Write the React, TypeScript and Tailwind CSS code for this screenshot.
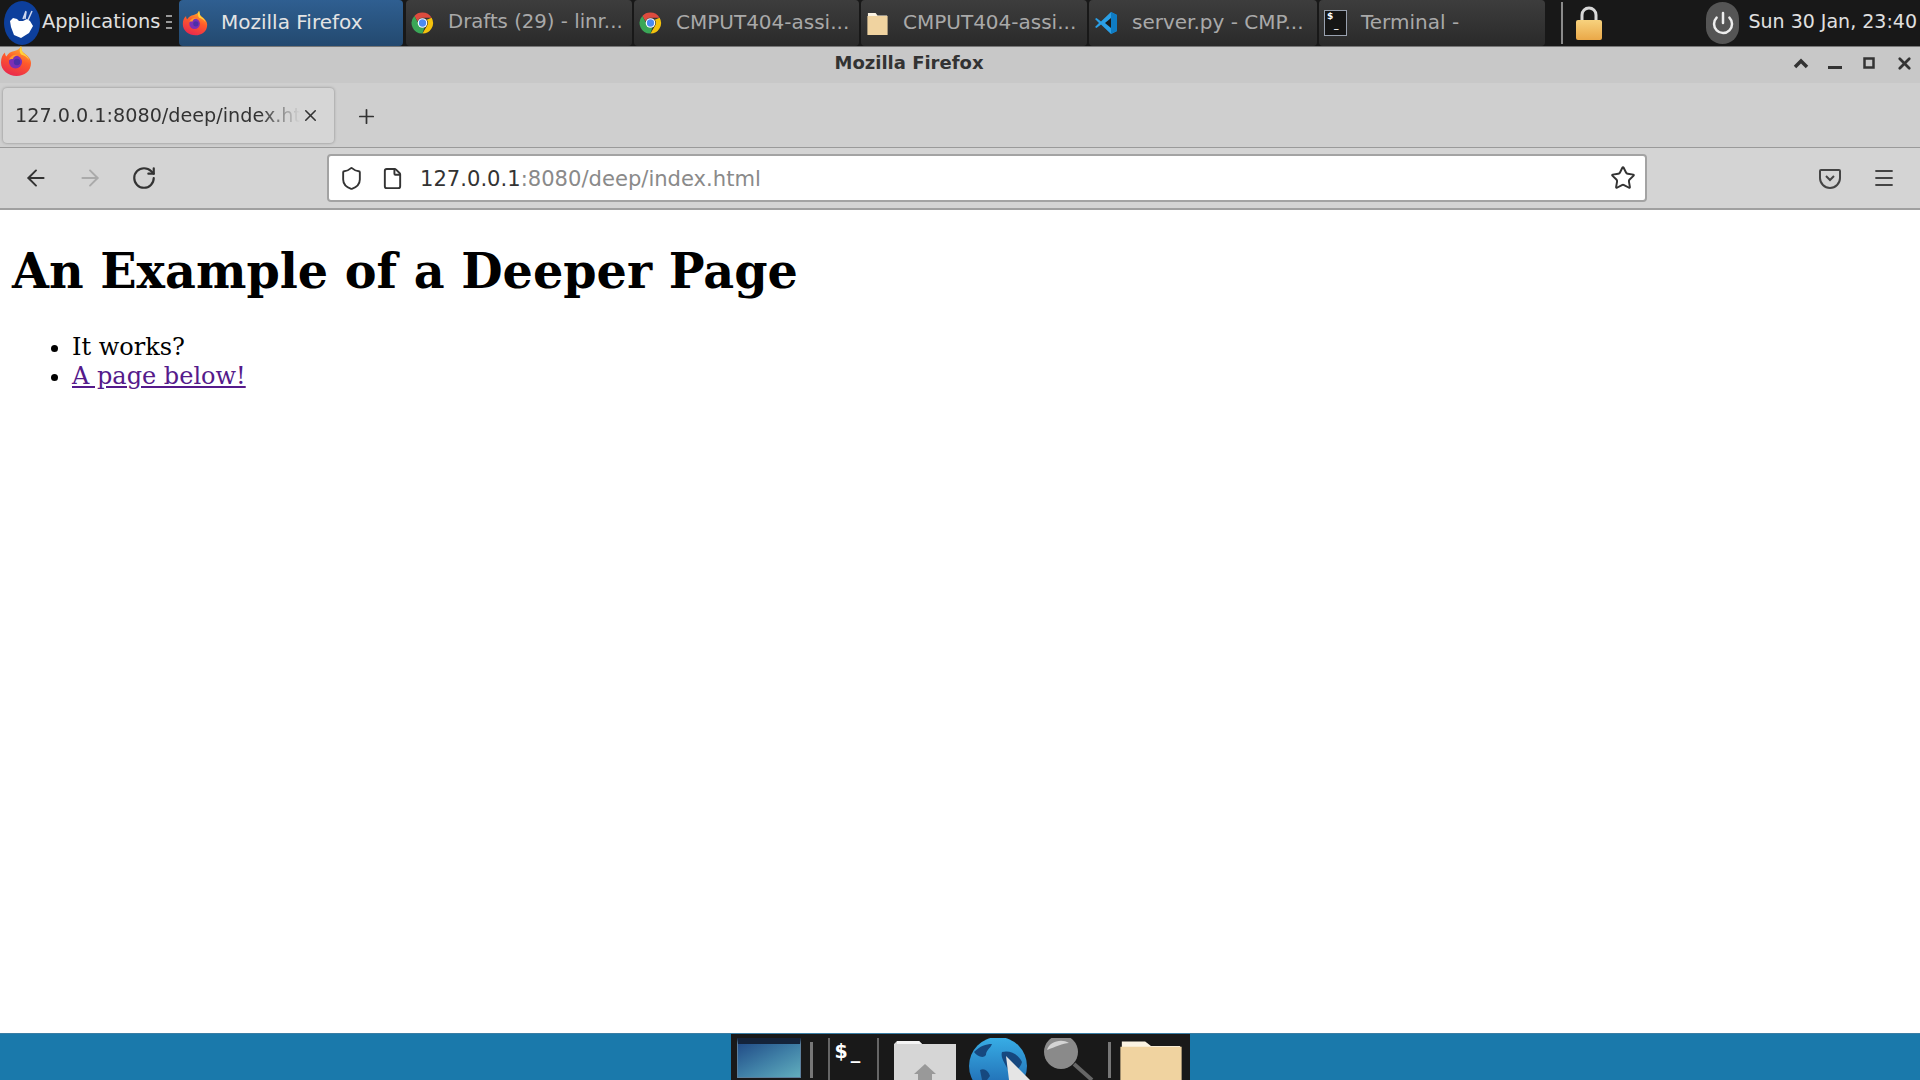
import React from 'react';
import { ArrowLeft, ArrowRight, RotateCw, Shield, File, Star, Menu, X, Plus, Power } from 'lucide-react';

const FirefoxIcon = ({ size }: { size: number }) => (
  <svg width={size} height={size} viewBox="0 0 32 32" className="shrink-0">
    <defs>
      <linearGradient id="ffBody" x1="0.7" y1="0" x2="0.3" y2="1">
        <stop offset="0" stopColor="#ffb52e" />
        <stop offset="0.45" stopColor="#ff5a2a" />
        <stop offset="1" stopColor="#e8274f" />
      </linearGradient>
    </defs>
    <path d="M21 1c1 3 0 5 3 7 4 3 7 6 7 10 0 8-6.500 13-14.500 13S1 25.500 1 17.500C1 13 2.500 9.500 5 7.500c0 2 .5 3 1.500 4 1.500-3 4-5 8-5.500 3-.5 5.500-2.500 6.500-5z" fill="url(#ffBody)" />
    <path d="M21 1c1 3 .5 6 3.500 8 2 1.500 4 3.500 4.500 6-2-3-5-5-8-5.500C19 7 19.500 4 21 1z" fill="#ffd43b" />
    <circle cx="15.500" cy="17" r="6.500" fill="#7b2fb5" />
    <circle cx="17" cy="17" r="3.200" fill="#4a2fa8" />
    <path d="M9 15c1-4 5-6 9-5-3 1-5 2-5 4-2 0-3 0-4 1z" fill="#ff9a2e" />
  </svg>
);

const ChromeIcon = () => (
  <svg width="23" height="26" viewBox="0 0 24 24" className="shrink-0">
    <path d="M12 1a11 11 0 0 1 9.530 5.500H12a5.500 5.500 0 0 0-5.200 3.700L3.500 4.600A11 11 0 0 1 12 1z" fill="#dd4b3e" />
    <path d="M21.530 6.500A11 11 0 0 1 12 23l4.700-8.200A5.500 5.500 0 0 0 16.500 8.500z" fill="#f4c20d" />
    <path d="M12 23A11 11 0 0 1 3.500 4.600l4.600 8.500a5 5 0 0 0 6 3.300z" fill="#3aa757" />
    <circle cx="12" cy="12" r="5" fill="#fff" />
    <circle cx="12" cy="12" r="3.800" fill="#4a8af4" />
  </svg>
);

const FolderIcon = ({ w, h }: { w: number; h: number }) => (
  <svg width={w} height={h} viewBox="0 0 24 24" preserveAspectRatio="none" className="shrink-0">
    <path d="M2 2h8l2 2.500h10V24H2z" fill="#fbf3e2" />
    <rect x="1.500" y="5" width="21" height="19" fill="#f0d3a0" />
  </svg>
);

const VsCodeIcon = () => (
  <svg width="24" height="28" viewBox="0 0 24 24" className="shrink-0">
    <path d="M17 1l6 3v16l-6 3-10-9.500L2.500 17 1 16l4-4-4-4 1.500-1L7 10.500z" fill="#2a9fe6" />
    <path d="M17 7l-6 5 6 5z" fill="#1b1b1b" />
    <path d="M17 1l6 3v16l-6 3z" fill="#0f7cc4" />
  </svg>
);

const TerminalIcon = () => (
  <div className="flex h-[26px] w-[23px] shrink-0 flex-col border border-gray-400 bg-[#161616] px-[2px] font-['DejaVu_Sans',sans-serif] text-[9px] leading-[10px] font-bold text-white">
    <span>$</span>
    <span className="-mt-[1px] ml-[7px]">_</span>
  </div>
);

const XfceLogo = () => (
  <svg width="38" height="44" viewBox="0 0 38 44" className="shrink-0">
    <ellipse cx="19" cy="22" rx="18" ry="22" fill="#0d3f9c" />
    <path d="M7 20l3-3 4 1 2 2 4 0 4-2 3 2 3 5-4 7-8 5-7-3-3-8z" fill="#fff" />
    <path d="M20 18l3-8M25 19l4-9M22 18l1-7" stroke="#cfd8ef" strokeWidth="1.500" fill="none" />
  </svg>
);

const taskTabs = [
  { label: 'Drafts (29) - linr...', icon: <ChromeIcon />, w: 'w-[226px]', size: 'text-[19.700px]' },
  { label: 'CMPUT404-assi...', icon: <ChromeIcon />, w: 'w-[225px]', size: 'text-[20px]' },
  { label: 'CMPUT404-assi...', icon: <FolderIcon w={23} h={24} />, w: 'w-[226px]', size: 'text-[20px]' },
  { label: 'server.py - CMP...', icon: <VsCodeIcon />, w: 'w-[228px]', size: 'text-[20px]' },
  { label: 'Terminal -', icon: <TerminalIcon />, w: 'w-[226px]', size: 'text-[20px]' },
];

const TopPanel = () => (
  <div className="flex h-[46px] shrink-0 items-stretch bg-[#181818] font-['DejaVu_Sans',sans-serif] text-[20px]">
    <div className="flex w-[179px] shrink-0 items-center pl-[3px]">
      <XfceLogo />
      <span className="mb-[2px] ml-[1px] text-[19.400px] text-[#e0e0e0]">Applications</span>
      <div className="mb-[2px] ml-[6px] flex h-[14px] w-[6px] flex-col justify-between">
        <div className="h-[2px] bg-[#999]" />
        <div className="h-[2px] bg-[#999]" />
        <div className="h-[2px] bg-[#999]" />
      </div>
    </div>
    <div className="flex w-[224px] shrink-0 items-center gap-[13px] rounded-[4px] bg-gradient-to-b from-[#2f5f91] to-[#23496f] pb-[1px] pl-[3px] text-[#e4e4e4]">
      <FirefoxIcon size={26} />
      <span className="mb-[2px]">Mozilla Firefox</span>
    </div>
    <div className="ml-[3px] flex gap-[2px]">
      {taskTabs.map((tab, i) => (
        <div
          key={i}
          className={`flex ${tab.w} ${tab.size} shrink-0 items-center gap-[14px] overflow-hidden rounded-[4px] bg-gradient-to-b from-[#3d3d3d] to-[#2a2a2a] pb-[1px] pl-[5px] whitespace-nowrap text-[#a9a9a9]`}
        >
          {tab.icon}
          <span className="mb-[2px]">{tab.label}</span>
        </div>
      ))}
    </div>
    <div className="my-[2px] ml-[16px] w-[2px] bg-[#8a8a8a]" />
    <div className="ml-[12px] flex items-center">
      <svg width="28" height="36" viewBox="0 0 28 36">
        <defs>
          <linearGradient id="lockBody" x1="0" y1="0" x2="0" y2="1">
            <stop offset="0" stopColor="#f7d27e" />
            <stop offset="1" stopColor="#eaa848" />
          </linearGradient>
        </defs>
        <path d="M7 16V10a7 7 0 0 1 14 0v6" fill="none" stroke="#d8d8d8" strokeWidth="3" />
        <rect x="1" y="15" width="26" height="20" rx="2" fill="url(#lockBody)" />
      </svg>
    </div>
    <div className="ml-auto flex items-center pr-[3px]">
      <div className="flex h-[42px] w-[33px] items-center justify-center rounded-full bg-[#555]">
        <Power size={24} strokeWidth={2.5} className="text-[#eee]" />
      </div>
      <span className="mb-[3px] ml-[9px] text-[19px] whitespace-nowrap text-[#e0e0e0]">Sun 30 Jan, 23:40</span>
    </div>
  </div>
);

const TitleBar = () => (
  <div className="relative flex h-[37px] shrink-0 items-center justify-center border-t border-[#777] bg-[#c8c8c8] pr-[102px] pb-[6px] font-['DejaVu_Sans',sans-serif] text-[18px] font-bold text-[#333]">
    <div className="absolute top-[-2px] left-0">
      <FirefoxIcon size={32} />
    </div>
    <span>Mozilla Firefox</span>
    <div className="absolute top-0 right-[6px] flex h-[32px] items-center gap-[18px]">
      <svg width="16" height="16" viewBox="0 0 16 16"><path d="M2 12l6-6 6 6" fill="none" stroke="#333" strokeWidth="3.500" /></svg>
      <svg width="16" height="16" viewBox="0 0 16 16"><rect x="1" y="11" width="14" height="3" fill="#333" /></svg>
      <svg width="16" height="16" viewBox="0 0 16 16"><rect x="3.500" y="3.500" width="9" height="9" fill="none" stroke="#333" strokeWidth="2.500" /></svg>
      <X size={19} strokeWidth={3.5} className="text-[#333]" />
    </div>
  </div>
);

const TabBar = () => (
  <div className="flex h-[65px] shrink-0 items-start border-b border-[#9a9a9a] bg-[#cfcfcf] pt-[5px] pl-[3px] font-['DejaVu_Sans',sans-serif]">
    <div className="flex h-[55px] w-[331px] items-center rounded-[4px] bg-[#d6d6d6] pl-[12px] shadow-[0_0_3px_rgba(0,0,0,0.35)]">
      <span className="mt-[2px] w-[285px] overflow-hidden text-[19.200px] whitespace-nowrap text-[#333] [mask-image:linear-gradient(to_right,black_86%,transparent)]">
        127.0.0.1:8080/deep/index.html
      </span>
      <X size={19} className="ml-[1px] text-[#333]" />
    </div>
    <Plus size={23} strokeWidth={1.8} className="mt-[17px] ml-[21px] text-[#333]" />
  </div>
);

const NavBar = () => (
  <div className="flex h-[62px] shrink-0 items-center border-b-2 border-[#a0a0a0] bg-[#d4d4d4] font-['DejaVu_Sans',sans-serif]">
    <div className="flex w-[327px] shrink-0 items-center gap-[28px] pl-[23px]">
      <ArrowLeft size={26} strokeWidth={1.8} className="text-[#333]" />
      <ArrowRight size={26} strokeWidth={1.8} className="text-[#aaa]" />
      <RotateCw size={26} strokeWidth={2} className="text-[#333]" />
    </div>
    <div className="flex h-[48px] w-[1320px] shrink-0 items-center rounded-[4px] border-2 border-[#a3a3a3] bg-white pl-[10px]">
      <Shield size={25} strokeWidth={1.8} className="text-[#333]" />
      <File size={23} strokeWidth={2} className="ml-[17px] text-[#333]" />
      <span className="mt-[2px] ml-[16px] text-[21.100px] whitespace-nowrap text-[#333]">
        127.0.0.1<span className="text-[#8a8a8a]">:8080/deep/index.html</span>
      </span>
      <Star size={26} strokeWidth={1.8} className="mr-[9px] ml-auto text-[#333]" />
    </div>
    <div className="ml-[171px] flex items-center gap-[30px]">
      <svg width="24" height="24" viewBox="0 0 24 24" fill="none" stroke="#444" strokeWidth="2">
        <path d="M3 4h18a1 1 0 0 1 1 1v7a10 10 0 0 1-20 0V5a1 1 0 0 1 1-1z" />
        <path d="M8 10l4 4 4-4" />
      </svg>
      <Menu size={24} strokeWidth={1.8} className="text-[#444]" />
    </div>
  </div>
);

const Dock = () => (
  <div className="flex h-[47px] shrink-0 justify-center overflow-hidden border-t border-[#3a7ea5] bg-[#1a79ab]">
    <div className="flex h-[46px] w-[459px] items-start overflow-hidden bg-[#191919] pt-[4px] pl-[6px]">
      <div className="h-[40px] w-[64px] shrink-0 border border-[#5c7f9c] border-t-[6px] border-t-[#14233a] bg-gradient-to-br from-[#234d87] via-[#3f7fa6] to-[#62aebd]" />
      <div className="mt-[4px] ml-[9px] h-[36px] w-[3px] shrink-0 bg-[#777]" />
      <div className="ml-[15px] flex h-[42px] w-[51px] shrink-0 items-start border-x-2 border-[#666] pl-[5px] font-['DejaVu_Sans',sans-serif] text-[19px] leading-[26px] font-bold text-white">
        <span>$</span>
        <span className="ml-[3px]">_</span>
      </div>
      <svg width="62" height="42" viewBox="0 0 62 42" className="ml-[15px] shrink-0">
        <path d="M0 6l3-3h22l3 3h34v36H0z" fill="#d6d6d6" />
        <path d="M3 3h22l3 3H3z" fill="#f5f5f5" />
        <path d="M31 26l-11 10h4v6h14v-6h4z" fill="#999" />
      </svg>
      <svg width="62" height="42" viewBox="0 0 62 42" className="ml-[12px] shrink-0">
        <defs>
          <linearGradient id="globeSea" x1="0" y1="0" x2="0" y2="1">
            <stop offset="0" stopColor="#38aee6" />
            <stop offset="1" stopColor="#1d62ab" />
          </linearGradient>
        </defs>
        <circle cx="30" cy="28" r="29" fill="url(#globeSea)" />
        <path d="M6 14c6-6 12-8 18-8-2 5-6 6-6 11-3 4-9 1-12-3zM34 14c8-2 16 2 20 10-2 8-10 12-14 8-2-5-8-12-6-18zM12 32c4-2 8 0 10 6l-3 4h-5z" fill="#16487f" />
        <path d="M38 18l24 24H41z" fill="#e5e5e5" />
      </svg>
      <svg width="58" height="42" viewBox="0 0 58 42" className="ml-[12px] shrink-0">
        <circle cx="19" cy="14" r="17" fill="#8a8a8a" />
        <path d="M5 12c2-8 14-12 22-7-6 0-14 4-22 7z" fill="#d4d4d4" />
        <path d="M32 26l18 16" stroke="#666" strokeWidth="4" />
      </svg>
      <div className="mt-[4px] ml-[8px] h-[36px] w-[3px] shrink-0 bg-[#777]" />
      <div className="ml-[5px] shrink-0">
        <FolderIcon w={70} h={42} />
      </div>
    </div>
  </div>
);

export default function App() {
  return (
    <div className="flex h-screen flex-col overflow-hidden bg-white">
      <TopPanel />
      <TitleBar />
      <TabBar />
      <NavBar />
      <main className="min-h-0 flex-1 pt-[35px] pl-[12px] font-['DejaVu_Serif',serif] text-[24px] leading-[29px] text-black">
        <h1 className="text-[47.700px] leading-[52px] font-bold">An Example of a Deeper Page</h1>
        <ul className="mt-[36px] list-disc pl-[60px]">
          <li>It works?</li>
          <li>
            <a href="#below" className="text-[#551a8b] underline">A page below!</a>
          </li>
        </ul>
      </main>
      <Dock />
    </div>
  );
}
